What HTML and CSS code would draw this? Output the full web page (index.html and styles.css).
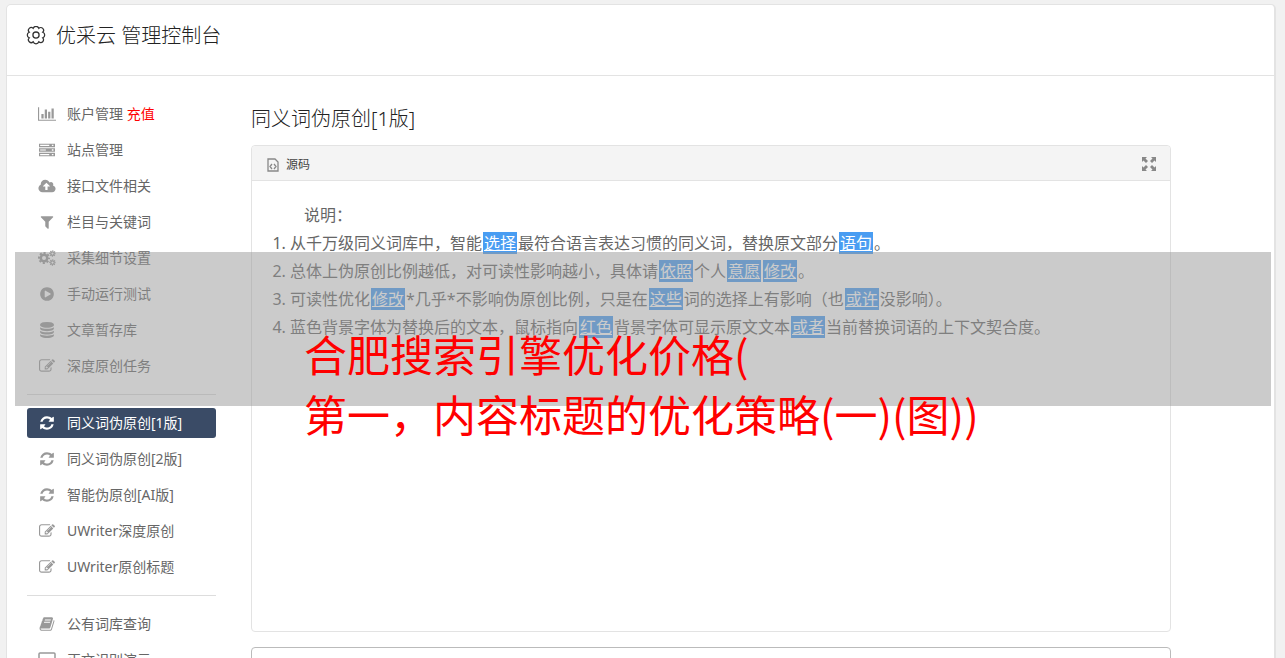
FILE: index.html
```html
<!DOCTYPE html>
<html lang="zh-CN">
<head>
    <meta charset="UTF-8">
    <meta name="viewport" content="width=device-width, initial-scale=1.0">
    <title>优采云 管理控制台</title>
    <link rel="stylesheet" href="styles.css">
</head>
<body>

    <!-- icons -->
    <svg class="sprite" aria-hidden="true">
        <symbol id="i-chart" viewBox="0 0 2048 1792"><path d="M640 896v512h-256v-512h256zm384-512v1024h-256v-1024h256zm1024 1152v128h-2048v-1536h128v1408h1920zm-640-896v768h-256v-768h256zm384-384v1152h-256v-1152h256z"/></symbol>
        <symbol id="i-server" viewBox="0 0 1792 1792"><path fill-rule="evenodd" d="M0 192h1792v384H0zM128 320v128h1024V320zM1440 300v150h180V300zM0 704h1792v384H0zM128 832v128h640V832zM1440 820v150h180V820zM0 1216h1792v384H0zM128 1344v128h1024v-128zM1440 1330v150h180v-150z"/></symbol>
        <symbol id="i-cloud" viewBox="-64 0 1920 1792"><path d="M1216 928q0-14-9-23l-352-352q-9-9-23-9t-23 9l-351 351q-10 12-10 24 0 14 9 23t23 9h224v352q0 13 9.500 22.500t22.500 9.500h192q13 0 22.500-9.500t9.500-22.500v-352h224q13 0 22.500-9.500t9.500-22.500zm640 288q0 159-112.500 271.500t-271.500 112.500h-1088q-185 0-316.500-131.500t-131.500-316.500q0-130 70-240t188-165q-2-30-2-43 0-212 150-362t362-150q156 0 285.500 87t188.500 231q71-62 166-62 106 0 181 75t75 181q0 76-41 138 130 31 213.500 135.500t83.500 238.500z"/></symbol>
        <symbol id="i-filter" viewBox="0 0 1792 1792"><path d="M1595 295q17 41-14 70l-493 493v742q0 42-39 59-13 5-25 5-27 0-45-19l-256-256q-19-19-19-45v-486l-493-493q-31-29-14-70 17-39 59-39h1280q42 0 59 39z"/></symbol>
        <symbol id="i-gears" viewBox="0 0 36 32"><g fill="none" stroke="currentColor"><circle cx="12" cy="16" r="6.500" stroke-width="5"/><circle cx="12" cy="16" r="10" stroke-width="4" stroke-dasharray="4.200 3.654" stroke-dashoffset="2.100"/><circle cx="29" cy="7" r="3.500" stroke-width="2.500"/><circle cx="29" cy="7" r="5.300" stroke-width="2.500" stroke-dasharray="2.200 1.963" stroke-dashoffset="1.100"/><circle cx="29" cy="25" r="3.500" stroke-width="2.500"/><circle cx="29" cy="25" r="5.300" stroke-width="2.500" stroke-dasharray="2.200 1.963" stroke-dashoffset="1.100"/></g></symbol>
        <symbol id="i-play" viewBox="0 0 1792 1792"><path d="M896 128q209 0 385.500 103t279.500 279.500 103 385.500-103 385.500-279.500 279.500-385.500 103-385.500-103-279.500-279.500-103-385.500 103-385.500 279.500-279.500 385.500-103zm384 823q32-18 32-55t-32-55l-544-320q-31-19-64-1-32 19-32 56v640q0 37 32 56 16 8 32 8 17 0 32-9z"/></symbol>
        <symbol id="i-database" viewBox="0 0 1792 1792"><path d="M896 768q237 0 443-43t325-127v170q0 69-103 128t-280 93.500-385 34.500-385-34.500-280-93.500-103-128v-170q119 84 325 127t443 43zm0 768q237 0 443-43t325-127v170q0 69-103 128t-280 93.500-385 34.500-385-34.500-280-93.500-103-128v-170q119 84 325 127t443 43zm0-384q237 0 443-43t325-127v170q0 69-103 128t-280 93.500-385 34.500-385-34.500-280-93.500-103-128v-170q119 84 325 127t443 43zm0-1152q208 0 385 34.500t280 93.500 103 128v128q0 69-103 128t-280 93.500-385 34.500-385-34.500-280-93.500-103-128v-128q0-69 103-128t280-93.500 385-34.500z"/></symbol>
        <symbol id="i-edit" viewBox="0 0 1792 1792"><path d="M888 1184l116-116-152-152-116 116v56h96v96h56zm440-720q-16-16-33 1l-350 350q-17 17-1 33t33-1l350-350q17-17 1-33zm80 594v190q0 119-84.500 203.500t-203.500 84.500h-832q-119 0-203.500-84.500t-84.500-203.500v-832q0-119 84.500-203.500t203.500-84.500h832q63 0 117 25 15 7 18 23 3 17-9 29l-49 49q-14 14-32 8-23-6-45-6h-832q-66 0-113 47t-47 113v832q0 66 47 113t113 47h832q66 0 113-47t47-113v-126q0-13 9-22l64-64q15-15 35-7t20 29zm-96-738l288 288-672 672h-288v-288zm444 132l-92 92-288-288 92-92q28-28 68-28t68 28l152 152q28 28 28 68t-28 68z"/></symbol>
        <symbol id="i-refresh" viewBox="0 0 1792 1792"><path d="M1639 1056q0 5-1 7-64 268-268 434.500t-478 166.500q-146 0-282.500-55t-243.500-157l-129 129q-19 19-45 19t-45-19-19-45v-448q0-26 19-45t45-19h448q26 0 45 19t19 45-19 45l-137 137q71 66 161 102t187 36q134 0 250-65t186-179q11-17 53-117 8-23 30-23h192q13 0 22.500 9.500t9.500 22.500zm25-800v448q0 26-19 45t-45 19h-448q-26 0-45-19t-19-45 19-45l138-138q-148-137-349-137-134 0-250 65t-186 179q-11 17-53 117-8 23-30 23h-199q-13 0-22.500-9.500t-9.500-22.500v-7q65-268 270-434.500t480-166.500q146 0 284 55.500t245 156.500l130-129q19-19 45-19t45 19 19 45z"/></symbol>
        <symbol id="i-book" viewBox="0 0 1792 1792"><path d="M1703 478q40 57 18 129l-275 906q-19 64-76.500 107.500t-122.500 43.500h-923q-77 0-148.500-53.500t-99.500-131.500q-24-67-2-127 0-4 3-27t4-37q1-8-3-21.500t-3-19.500q2-11 8-21t16.500-23.500 16.500-23.500q23-38 45-91.500t30-91.500q3-10 .5-30t-.5-28q3-11 17-28t17-23q21-36 42-92t25-90q1-9-2.500-32t.5-28q4-13 22-30.500t22-22.500q19-26 42.500-84.500t27.500-96.500q1-8-3-25.500t-2-26.500q2-8 9-18t18-23 17-21q8-12 16.500-30.500t15-35 16-36 19.500-32 26.500-23.500 36-11.500 47.500 5.500l-1 3q38-9 51-9h761q74 0 114 56t18 130l-274 906q-36 119-71.500 153.500t-128.500 34.500h-869q-27 0-38 15-11 16-1 43 24 70 144 70h923q29 0 56-15.500t35-41.500l300-987q7-22 5-57 38 15 59 43zm-1064 2q-4 13 2 22.500t20 9.500h608q13 0 25.500-9.500t16.500-22.500l21-64q4-13-2-22.500t-20-9.500h-608q-13 0-25.500 9.500t-16.500 22.500zm-83 256q-4 13 2 22.500t20 9.500h608q13 0 25.500-9.500t16.500-22.500l21-64q4-13-2-22.500t-20-9.500h-608q-13 0-25.500 9.500t-16.500 22.500z"/></symbol>
        <symbol id="i-laptop" viewBox="0 0 18 16"><rect x="1" y="1" width="16" height="11" rx="1" fill="none" stroke="currentColor" stroke-width="1.500"/><path d="M0 13h18v2H0z"/></symbol>
    </svg>

    <div class="page">
        <header class="header">
            <svg class="logo" viewBox="-1 0 22 22"><g fill="none" stroke="#333" stroke-width="1.400"><path d="M17.400 13.100A2.600 2.600 0 0 1 13.100 17.400A3.300 3.300 0 0 1 6.900 17.400A2.600 2.600 0 0 1 2.600 13.100A3.300 3.300 0 0 1 2.600 6.900A2.600 2.600 0 0 1 6.900 2.600A3.300 3.300 0 0 1 13.100 2.600A2.600 2.600 0 0 1 17.400 6.900A3.300 3.300 0 0 1 17.400 13.100Z"/><circle cx="10" cy="10" r="3.400"/></g></svg>
            <h1>优采云 管理控制台</h1>
        </header>

        <div class="content">
            <nav class="sidebar">
                <a href="#"><svg><use href="#i-chart"/></svg><span>账户管理 <span class="red">充值</span></span></a>
                <a href="#"><svg><use href="#i-server"/></svg>站点管理</a>
                <a href="#"><svg><use href="#i-cloud"/></svg>接口文件相关</a>
                <a href="#"><svg><use href="#i-filter"/></svg>栏目与关键词</a>
                <a href="#"><svg><use href="#i-gears"/></svg>采集细节设置</a>
                <a href="#"><svg><use href="#i-play"/></svg>手动运行测试</a>
                <a href="#"><svg><use href="#i-database"/></svg>文章暂存库</a>
                <a href="#"><svg><use href="#i-edit"/></svg>深度原创任务</a>
                <hr>
                <a href="#" class="active"><svg><use href="#i-refresh"/></svg>同义词伪原创[1版]</a>
                <a href="#"><svg><use href="#i-refresh"/></svg>同义词伪原创[2版]</a>
                <a href="#"><svg><use href="#i-refresh"/></svg>智能伪原创[AI版]</a>
                <a href="#"><svg><use href="#i-edit"/></svg>UWriter深度原创</a>
                <a href="#"><svg><use href="#i-edit"/></svg>UWriter原创标题</a>
                <hr>
                <a href="#"><svg><use href="#i-book"/></svg>公有词库查询</a>
                <a href="#"><svg><use href="#i-laptop"/></svg>正文识别演示</a>
            </nav>

            <main class="main">
                <h2>同义词伪原创[1版]</h2>

                <div class="editor">
                    <div class="toolbar">
                        <button type="button"><svg class="source-icon" viewBox="0 0 12 16"><path d="M1 3h7l3 3v9H1z M5 8L3 10.500L5 13 M7 8l2 2.500L7 13" fill="none" stroke="#888" stroke-width="1.300"/></svg>源码</button>
                        <button type="button" aria-label="最大化"><svg class="max-icon" viewBox="0 0 14 14"><path fill="#888" d="M0 0h5L3.500 1.500L6 4L4 6L1.500 3.500L0 5zM14 0v5l-1.500-1.500L10 6L8 4l2.500-2.500L9 0zM0 14V9l1.500 1.500L4 8l2 2l-2.500 2.500L5 14zM14 14H9l1.500-1.500L8 10l2-2l2.500 2.500L14 9z"/></svg></button>
                    </div>
                    <div class="text">
                        <p>说明：</p>
                        <ol>
                            <li>从千万级同义词库中，智能<a href="#">选择</a>最符合语言表达习惯的同义词，替换原文部分<a href="#">语句</a>。</li>
                            <li>总体上伪原创比例越低，对可读性影响越小，具体请<a href="#">依照</a>个人<a href="#">意愿</a><a href="#">修改</a>。</li>
                            <li>可读性优化<a href="#">修改</a>*几乎*不影响伪原创比例，只是在<a href="#">这些</a>词的选择上有影响（也<a href="#">或许</a>没影响）。</li>
                            <li>蓝色背景字体为替换后的文本，鼠标指向<a href="#">红色</a>背景字体可显示原文文本<a href="#">或者</a>当前替换词语的上下文契合度。</li>
                        </ol>
                    </div>
                </div>

                <textarea class="source" aria-label="原文"></textarea>
            </main>
        </div>
    </div>

    <div class="banner">合肥搜索引擎优化价格(<br>第一，内容标题的优化策略(一)(图))</div>

</body>
</html>
```
FILE: styles.css
```css
* {
    box-sizing: border-box;
}

body {
    position: relative;
    height: 100vh;
    margin: 0;
    padding: 4px 9px 0 6px;
    overflow: hidden;
    background-color: #f1f1f1;
    color: #666;
    font-family: "Noto Sans", "Noto Sans CJK SC", sans-serif;
    font-size: 14px;
}

.sprite {
    display: none;
}

.page {
    background-color: #fff;
    border: 1px solid #e3e3e3;
    border-right-width: 2px;
    border-radius: 5px;
}

.header {
    display: flex;
    align-items: center;
    gap: 10px;
    padding: 16px 19px 24px;
    border-bottom: 1px solid #e3e3e3;
}

.logo {
    width: 20px;
    height: 20px;
}

h1,
h2 {
    margin: 0;
    color: #222;
    font-size: 20px;
    font-weight: 300;
    line-height: 30px;
}

.content {
    display: flex;
    gap: 35px;
    padding: 23px 20px;
}

.sidebar {
    display: flex;
    flex: 0 0 189px;
    flex-direction: column;
    gap: 6px;
}

.sidebar a {
    display: flex;
    align-items: center;
    gap: 11px;
    height: 30px;
    padding: 0 0 1px 11px;
    border-radius: 3px;
    color: #666;
    line-height: 20px;
    text-decoration: none;
}

.sidebar svg {
    width: 18px;
    height: 16px;
    color: #999;
    fill: currentColor;
}

.sidebar hr {
    width: 100%;
    margin: 7px 0;
    border: 0;
    border-top: 1px solid #ddd;
}

.sidebar .active {
    background-color: #3a4b66;
    color: #fff;
}

.sidebar .active svg {
    color: #fff;
}

.sidebar .red {
    color: #f00;
}

.main {
    flex: 1;
    max-width: 920px;
    padding-top: 5px;
}

.editor {
    min-height: 487px;
    margin: 11px 0 15px;
    border: 1px solid #e3e3e3;
    border-radius: 4px;
}

.toolbar {
    display: flex;
    align-items: center;
    justify-content: space-between;
    height: 35px;
    padding: 2px 14px 0 15px;
    background-color: #f4f4f4;
    border-bottom: 1px solid #e3e3e3;
    border-radius: 4px 4px 0 0;
}

.toolbar button {
    display: flex;
    align-items: center;
    gap: 7px;
    padding: 0;
    border: 0;
    background: none;
    color: #444;
    font: inherit;
    font-size: 12px;
}

.source-icon {
    width: 12px;
    height: 16px;
}

.max-icon {
    width: 14px;
    height: 14px;
}

.text {
    padding: 20px;
    font-size: 16px;
    line-height: 28px;
}

.text p {
    margin: 0;
    text-indent: 2em;
}

.text ol {
    margin: 0;
    padding-left: 18px;
}

.text a {
    margin: 0 1px;
    padding: 0 1px;
    background-color: #499df2;
    color: #fff;
}

.source {
    display: block;
    width: 100%;
    height: 120px;
    border: 1px solid #bbb;
    border-radius: 4px;
    resize: none;
}

/* caption strip over the page */
.banner {
    position: absolute;
    top: 252px;
    left: 15px;
    right: 14px;
    height: 154px;
    padding: 71px 0 0 289px;
    background-color: rgba(151, 151, 151, 0.5);
    color: #f00;
    font-family: "Noto Sans CJK SC", sans-serif;
    font-size: 43px;
    line-height: 60px;
    white-space: nowrap;
}
```
